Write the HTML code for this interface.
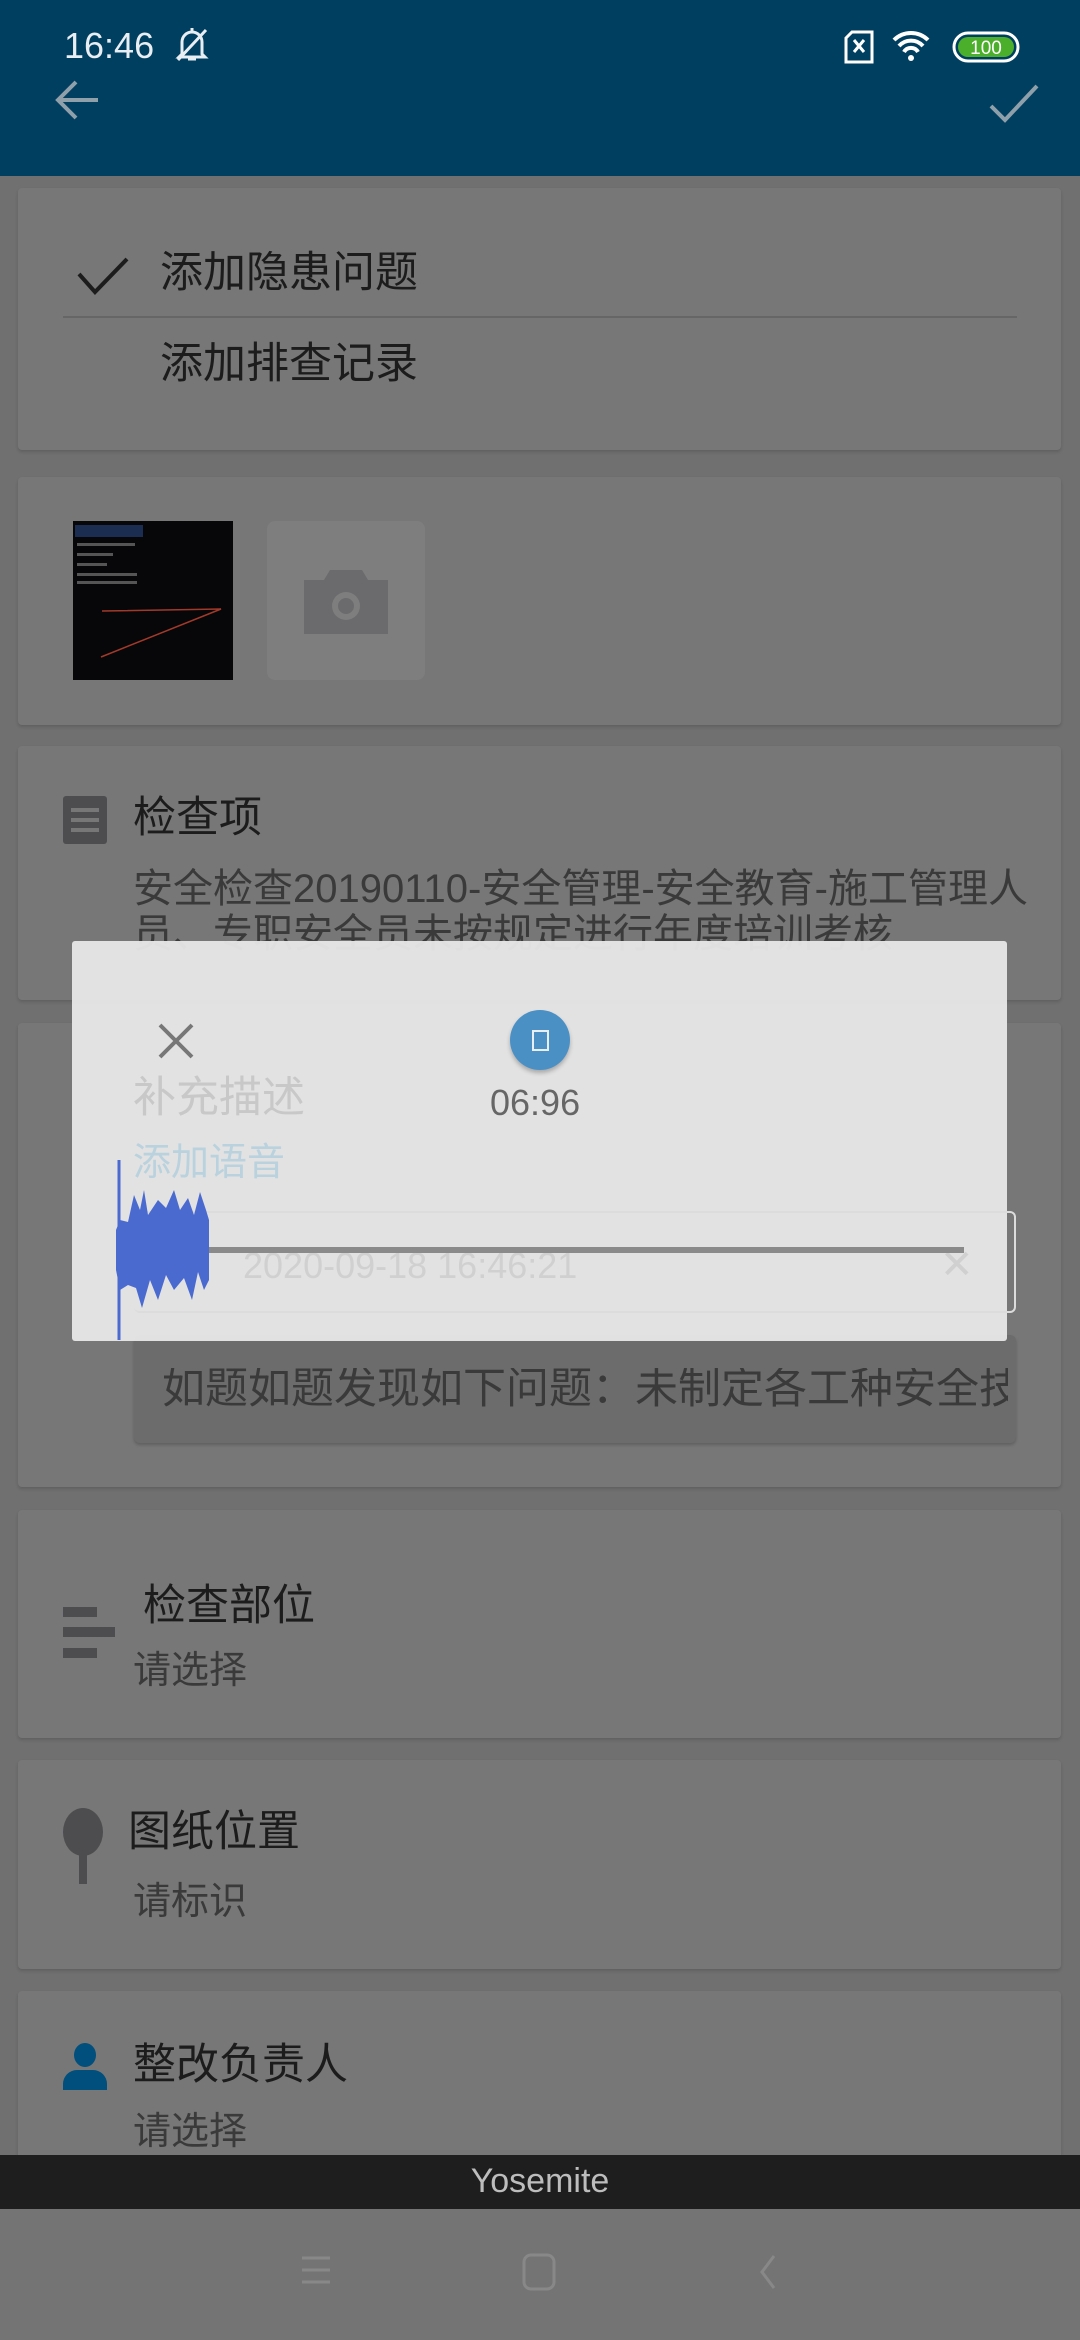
<!DOCTYPE html>
<html><head><meta charset="utf-8"><style>
*{margin:0;padding:0;box-sizing:border-box}
body{width:1080px;height:2340px;overflow:hidden;background:#707070;font-family:"Liberation Sans","Noto Sans CJK SC",sans-serif;position:relative}
.a{position:absolute}
.card{position:absolute;left:18px;width:1043px;background:#777;border-radius:4px;box-shadow:0 2px 3px rgba(0,0,0,.15)}
.t{position:absolute;color:#1c1c1c;font-size:43px;white-space:nowrap;line-height:1}
.g{color:#3a3a3a;font-size:38px}
</style></head><body>
<div class="a" style="left:0;top:0;width:1080px;height:176px;background:#003f60"></div>
<div class="t" style="left:64px;top:28px;color:#e8eef2;font-size:36px">16:46</div>
<svg class="a" style="left:174px;top:24px" width="36" height="40" viewBox="0 0 36 40"><path d="M18 4v3M8 30V18a10 10 0 0 1 20 0v12l3 3H5zM14 35h8M4 36L32 6" stroke="#e8eef2" stroke-width="3" fill="none"/></svg>
<svg class="a" style="left:842px;top:30px" width="180" height="34" viewBox="0 0 180 34"><path d="M4 8l6-6h20v30H4z" stroke="#fff" stroke-width="3" fill="none"/><path d="M12 10l10 12M22 10l-10 12" stroke="#fff" stroke-width="3"/><path d="M52 10a24 24 0 0 1 34 0M57 16a16 16 0 0 1 24 0M62 22a8 8 0 0 1 14 0" stroke="#fff" stroke-width="4" fill="none"/><circle cx="69" cy="28" r="3" fill="#fff"/><rect x="112" y="3" width="64" height="28" rx="14" stroke="#fff" stroke-width="3" fill="none"/><rect x="116" y="7" width="56" height="20" rx="10" fill="#4caf2b"/><text x="144" y="24" font-size="19" fill="#fff" text-anchor="middle" font-family="Liberation Sans">100</text></svg>
<svg class="a" style="left:52px;top:78px" width="50" height="44" viewBox="0 0 50 44"><path d="M46 22H6M24 4L6 22l18 18" stroke="#8fa0aa" stroke-width="4" fill="none"/></svg>
<svg class="a" style="left:988px;top:82px" width="52" height="42" viewBox="0 0 52 42"><path d="M3 24l14 14L49 4" stroke="#8fa0aa" stroke-width="4" fill="none"/></svg>

<div class="card" style="top:188px;height:262px"></div>
<svg class="a" style="left:76px;top:256px" width="54" height="40" viewBox="0 0 54 40"><path d="M3 18l16 18L51 3" stroke="#1c1c1c" stroke-width="4" fill="none"/></svg>
<div class="t" style="left:160px;top:252px">添加隐患问题</div>
<div class="a" style="left:63px;top:316px;width:954px;height:2px;background:#666"></div>
<div class="t" style="left:160px;top:343px">添加排查记录</div>

<div class="card" style="top:477px;height:248px"></div>
<div class="a" style="left:73px;top:521px;width:160px;height:159px;background:#070608">
<div class="a" style="left:2px;top:4px;width:68px;height:12px;background:#1b2e52"></div>
<svg class="a" style="left:0;top:0" width="160" height="159"><path d="M29 142L148 140L28 188" transform="translate(0,-52)" stroke="#a23a2b" stroke-width="1.5" fill="none"/><g fill="#555"><rect x="4" y="22" width="58" height="3"/><rect x="4" y="32" width="36" height="3"/><rect x="4" y="42" width="30" height="3"/><rect x="4" y="52" width="60" height="3"/><rect x="4" y="60" width="60" height="3"/></g></svg></div>
<div class="a" style="left:267px;top:521px;width:158px;height:159px;background:#7e7e7e;border-radius:8px"></div>
<svg class="a" style="left:304px;top:568px" width="84" height="66" viewBox="0 0 84 66"><path d="M0 12h20l6-10h32l6 10h20v54H0z" fill="#6b6b6d"/><circle cx="42" cy="38" r="14" fill="#7e7e7e"/><circle cx="42" cy="38" r="8" fill="#6b6b6d"/></svg>

<div class="card" style="top:746px;height:254px"></div>
<div class="a" style="left:63px;top:796px;width:44px;height:48px;background:#4d4d50;border-radius:3px"></div>
<div class="a" style="left:71px;top:808px;width:28px;height:4px;background:#777"></div>
<div class="a" style="left:71px;top:818px;width:28px;height:4px;background:#777"></div>
<div class="a" style="left:71px;top:828px;width:28px;height:4px;background:#777"></div>
<div class="t" style="left:133px;top:797px">检查项</div>
<div class="t g" style="left:133px;top:869px;font-size:40px">安全检查20190110-安全管理-安全教育-施工管理人</div>
<div class="t g" style="left:133px;top:914px;font-size:40px">员、专职安全员未按规定进行年度培训考核</div>

<div class="card" style="top:1023px;height:464px"></div>
<div class="a" style="left:134px;top:1335px;width:882px;height:108px;background:#6c6c6c;border-radius:6px;box-shadow:0 2px 3px rgba(0,0,0,.2)"></div>
<div class="t g" style="left:162px;top:1368px;font-size:43px;width:846px;overflow:hidden">如题如题发现如下问题：未制定各工种安全技术</div>

<div class="card" style="top:1510px;height:228px"></div>
<div class="a" style="left:63px;top:1607px;width:34px;height:10px;background:#4d4d50"></div>
<div class="a" style="left:63px;top:1627px;width:52px;height:10px;background:#4d4d50"></div>
<div class="a" style="left:63px;top:1648px;width:34px;height:10px;background:#4d4d50"></div>
<div class="t" style="left:143px;top:1585px">检查部位</div>
<div class="t g" style="left:133px;top:1652px">请选择</div>

<div class="card" style="top:1760px;height:209px"></div>
<div class="a" style="left:63px;top:1893px;width:0;height:0"></div>
<div class="a" style="left:63px;top:1893px"></div>
<div class="a" style="left:63px;top:1893px"></div>
<div class="a" style="left:63px;top:1893px"></div>
<div class="a" style="left:63px;top:1893px"></div>
<div class="a" style="left:63px;top:1893px"></div>
<div class="a" style="left:63px;top:1893px"></div>
<div class="a" style="left:63px;top:1808px;width:40px;height:48px;background:#4d4d50;border-radius:50%"></div>
<div class="a" style="left:79px;top:1846px;width:8px;height:38px;background:#4d4d50"></div>
<div class="t" style="left:128px;top:1811px">图纸位置</div>
<div class="t g" style="left:133px;top:1883px">请标识</div>

<div class="card" style="top:1991px;height:200px"></div>
<div class="a" style="left:74px;top:2043px;width:22px;height:24px;background:#004f7c;border-radius:50%"></div>
<div class="a" style="left:63px;top:2070px;width:44px;height:20px;background:#004f7c;border-radius:14px 14px 0 0"></div>
<div class="t" style="left:133px;top:2044px">整改负责人</div>
<div class="t g" style="left:133px;top:2113px">请选择</div>

<div class="a" style="left:0;top:2155px;width:1080px;height:54px;background:#1e1e1e"></div>
<div class="t" style="left:0;width:1080px;text-align:center;top:2164px;color:#bdbdbd;font-size:34px">Yosemite</div>
<div class="a" style="left:0;top:2209px;width:1080px;height:131px;background:#747474"></div>
<svg class="a" style="left:296px;top:2250px" width="500" height="44"><path d="M6 8h28M6 20h28M6 32h28" stroke="#888" stroke-width="3"/><rect x="228" y="5" width="30" height="34" rx="7" stroke="#888" stroke-width="3" fill="none"/><path d="M478 6l-12 16l12 16" stroke="#888" stroke-width="3" fill="none"/></svg>

<!-- dialog -->
<div class="a" style="left:72px;top:941px;width:935px;height:400px;background:rgba(232,232,232,.95);border-radius:3px"></div>
<div class="t" style="left:133px;top:1077px;color:#c8c8c8">补充描述</div>
<div class="t" style="left:133px;top:1144px;color:#b9d2de;font-size:38px">添加语音</div>
<div class="a" style="left:134px;top:1211px;width:882px;height:102px;border:2px solid #dcdcdc;border-left:none;border-radius:6px"></div>
<div class="t" style="left:243px;top:1248px;color:#d0d0d0;font-size:36px">2020-09-18 16:46:21</div>
<div class="t" style="left:940px;top:1245px;color:#d0d0d0;font-size:40px">✕</div>
<svg class="a" style="left:155px;top:1020px" width="42" height="42" viewBox="0 0 42 42"><path d="M5 5l32 32M37 5L5 37" stroke="#777" stroke-width="4"/></svg>
<div class="a" style="left:510px;top:1010px;width:60px;height:60px;border-radius:50%;background:#4a90c4;box-shadow:0 3px 4px rgba(0,0,0,.25)"></div>
<div class="a" style="left:532px;top:1030px;width:17px;height:21px;border:2px solid #e8f0f6"></div>
<div class="t" style="left:490px;top:1085px;color:#666;font-size:36px">06:96</div>
<div class="a" style="left:209px;top:1247px;width:755px;height:6px;background:#8a8a8a"></div>
<svg class="a" style="left:114px;top:1160px" width="98" height="180" viewBox="0 0 98 180"><path d="M5 0v180" stroke="#4a6ad0" stroke-width="3"/><path d="M2 70L6 60L14 62L20 35L26 50L30 30L34 55L44 40L52 48L60 30L66 50L74 38L80 55L86 32L92 50L95 60V120L90 130L84 112L78 140L70 118L60 130L52 115L44 140L36 120L28 148L22 128L14 125L6 130L2 110Z" fill="#4a6ad0"/></svg>
</body></html>
